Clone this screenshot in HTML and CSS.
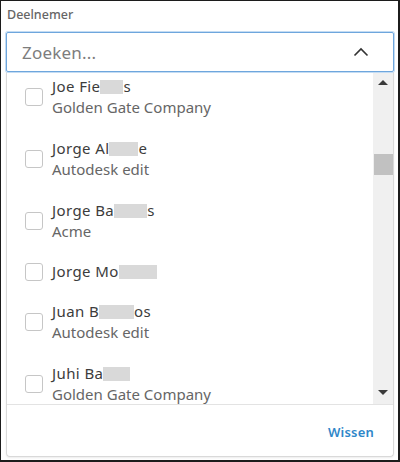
FILE: index.html
```html
<!DOCTYPE html>
<html>
<head>
<meta charset="utf-8">
<link rel="stylesheet" href="styles.css">
</head>
<body>
<div class="frame">
  <div class="label">Deelnemer</div>
  <div class="input">
    <span class="placeholder">Zoeken...</span>
    <svg class="chevron" width="16" height="10" viewBox="0 0 16 10"><path d="M1.5 8.5 L8 2 L14.5 8.5" fill="none" stroke="#333" stroke-width="1.6"/></svg>
  </div>
  <div class="panel">
    <div class="list-wrap">
      <div class="list">
        <div class="items">
          <div class="item">
            <span class="box"></span>
            <div class="text">
              <div class="name">Joe Fie<span class="redact w23"></span>s</div>
              <div class="company">Golden Gate Company</div>
            </div>
          </div>
          <div class="item">
            <span class="box"></span>
            <div class="text">
              <div class="name">Jorge Al<span class="redact w29"></span>e</div>
              <div class="company">Autodesk edit</div>
            </div>
          </div>
          <div class="item">
            <span class="box"></span>
            <div class="text">
              <div class="name">Jorge Ba<span class="redact w33"></span>s</div>
              <div class="company">Acme</div>
            </div>
          </div>
          <div class="item single">
            <span class="box"></span>
            <div class="text">
              <div class="name">Jorge Mo<span class="redact w38"></span></div>
            </div>
          </div>
          <div class="item">
            <span class="box"></span>
            <div class="text">
              <div class="name">Juan B<span class="redact w35"></span>os</div>
              <div class="company">Autodesk edit</div>
            </div>
          </div>
          <div class="item">
            <span class="box"></span>
            <div class="text">
              <div class="name">Juhi Ba<span class="redact w27"></span></div>
              <div class="company">Golden Gate Company</div>
            </div>
          </div>
        </div>
      </div>
      <div class="scrollbar">
        <div class="arrow up"></div>
        <div class="thumb"></div>
        <div class="spacer"></div>
        <div class="arrow down"></div>
      </div>
    </div>
    <div class="footer">
      <span class="clear">Wissen</span>
    </div>
  </div>
</div>
</body>
</html>
```

FILE: styles.css
```css
* { box-sizing: border-box; }
html, body { margin: 0; padding: 0; background: #fff; }
body { font-family: "Noto Sans", "Open Sans", sans-serif; }

.frame {
  width: 400px;
  height: 462px;
  border-top: 1px solid #1c1c1c;
  border-left: 1px solid #1c1c1c;
  border-right: 2px solid #1c1c1c;
  border-bottom: 2px solid #1c1c1c;
  padding: 0 4px 0 5px;
  display: flex;
  flex-direction: column;
  background: #fff;
}

.label {
  font-size: 12.5px;
  color: #666;
  line-height: 16px;
  padding: 6px 0 0 1px;
  height: 31px;
  font-weight: 500;
}

.input {
  height: 40px;
  border: 1px solid #6ea6dd;
  box-shadow: 0 0 0 1px #c4dcf3;
  border-radius: 2px;
  display: flex;
  align-items: center;
  justify-content: space-between;
  padding: 0 24px 0 15px;
  position: relative;
  z-index: 1;
}

.placeholder {
  font-size: 17px;
  color: #7d7d7d;
  letter-spacing: 0.2px;
}

.chevron { display: block; }

.panel {
  flex: 1;
  border: 1px solid #d9d9d9;
  border-top: none;
  border-radius: 0 0 4px 4px;
  display: flex;
  flex-direction: column;
  margin-bottom: 3px;
  box-shadow: 0 1px 2px rgba(0,0,0,0.08);
}

.list-wrap {
  height: 332px;
  display: flex;
}

.list {
  flex: 1;
  overflow: hidden;
}

.items { margin-top: -6px; }

.item {
  display: flex;
  align-items: center;
  padding: 10px 0 10px 18px;
}
.item.single { padding: 9px 0 9px 18px; }

.box {
  width: 18px;
  height: 18px;
  border: 1px solid #c6c6c6;
  border-radius: 3px;
  flex: none;
  margin-right: 9px;
  background: #fff;
}

.text { line-height: 21px; }

.name {
  font-size: 15px;
  color: #3c3c3c;
  white-space: nowrap;
  letter-spacing: 0.4px;
}

.company {
  font-size: 15px;
  color: #666;
  white-space: nowrap;
}

.redact {
  display: inline-block;
  height: 14px;
  background: #d9d9d9;
  vertical-align: -2px;
}
.w23 { width: 23px; }
.w27 { width: 27px; }
.w29 { width: 29px; }
.w33 { width: 33px; }
.w35 { width: 35px; }
.w38 { width: 38px; }

.scrollbar {
  width: 20px;
  background: #f0f0f0;
  display: flex;
  flex-direction: column;
  align-items: center;
}

.arrow {
  width: 0;
  height: 0;
  border-left: 5px solid transparent;
  border-right: 5px solid transparent;
}
.arrow.up {
  border-bottom: 5px solid #3a3a3a;
  margin-top: 8px;
}
.arrow.down {
  border-top: 5px solid #3a3a3a;
  margin-bottom: 9px;
}

.thumb {
  width: 19px;
  height: 21px;
  background: #c1c1c1;
  margin-top: 69px;
}

.spacer { flex: 1; }

.footer {
  flex: 1;
  border-top: 1px solid #e3e3e3;
  display: flex;
  align-items: center;
  justify-content: flex-end;
  padding-right: 19px;
  padding-top: 2px;
}

.clear {
  font-size: 13px;
  font-weight: 600;
  color: #2f87c9;
  letter-spacing: 0.2px;
}
```
